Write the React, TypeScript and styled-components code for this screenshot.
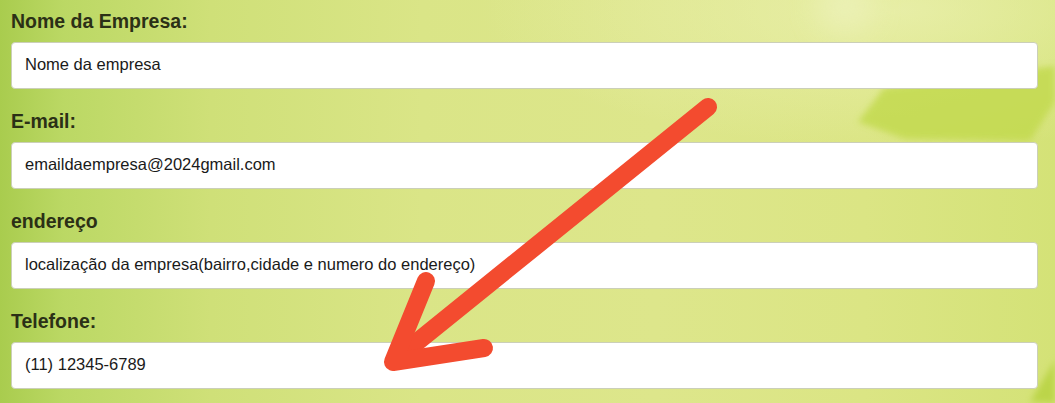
import React from "react";
import styled, { createGlobalStyle } from "styled-components";

const GlobalStyle = createGlobalStyle`
  html, body {
    margin: 0;
    padding: 0;
  }
  body {
    font-family: "Liberation Sans", Arial, sans-serif;
  }
`;

const fields = [
  { label: "Nome da Empresa:", value: "Nome da empresa" },
  { label: "E-mail:", value: "emaildaempresa@2024gmail.com" },
  { label: "endereço", value: "localização da empresa(bairro,cidade e numero do endereço)" },
  { label: "Telefone:", value: "(11) 12345-6789" },
];

const App: React.FC = () => {
  return (
    <>
      <GlobalStyle />
      <Page>
        <Backdrop viewBox="0 0 1055 403" preserveAspectRatio="none">
          <defs>
            <filter id="soft" x="-20%" y="-20%" width="140%" height="140%">
              <feGaussianBlur stdDeviation="3" />
            </filter>
            <filter id="softer" x="-50%" y="-50%" width="200%" height="200%">
              <feGaussianBlur stdDeviation="14" />
            </filter>
          </defs>
          <circle cx="845" cy="6" r="28" fill="#eef3bf" opacity="0.6" filter="url(#softer)" />
          <path
            d="M858 122 L884 88 L1055 66 L1055 102 L1030 141 L905 139 Z"
            fill="#c3da4f"
            opacity="0.85"
            filter="url(#soft)"
          />
          <path d="M1030 402 L1055 360 L1055 403 Z" fill="#bcd548" filter="url(#soft)" />
        </Backdrop>
        <Form>
          {fields.map((f) => (
            <Field key={f.label}>
              <Label>{f.label}</Label>
              <Input type="text" defaultValue={f.value} />
            </Field>
          ))}
        </Form>
        <Arrow viewBox="0 0 1055 403">
          <g
            fill="none"
            stroke="#f34b2f"
            strokeWidth="18"
            strokeLinecap="round"
            strokeLinejoin="round"
          >
            <line x1="708" y1="107" x2="396" y2="359" />
            <polyline points="426,281 393,362 484,348" />
          </g>
        </Arrow>
      </Page>
    </>
  );
};

const Page = styled.div`
  position: relative;
  width: 1055px;
  height: 403px;
  overflow: hidden;
  background:
    radial-gradient(ellipse 420px 140px at 900px 10px, rgba(240, 244, 190, 0.6), rgba(240, 244, 190, 0) 100%),
    linear-gradient(90deg, #a9cc4e 0%, #bbd864 6%, #cfe078 20%, #dae587 40%, #dde68b 62%, #dbe584 82%, #d4e277 100%);
`;

const Backdrop = styled.svg`
  position: absolute;
  inset: 0;
  width: 100%;
  height: 100%;
`;

const Arrow = styled.svg`
  position: absolute;
  inset: 0;
  width: 100%;
  height: 100%;
  pointer-events: none;
`;

const Form = styled.form`
  position: relative;
  display: flex;
  flex-direction: column;
  gap: 21px;
  padding: 10px 17px 0 11px;
`;

const Field = styled.div`
  display: flex;
  flex-direction: column;
  gap: 10px;
`;

const Label = styled.label`
  font-size: 19.5px;
  line-height: 22px;
  font-weight: 700;
  color: #2b3016;
`;

const Input = styled.input`
  box-sizing: border-box;
  width: 100%;
  height: 47px;
  padding: 0 13px 3px;
  border: 1px solid #cbcfb8;
  border-radius: 4px;
  background: #ffffff;
  font-family: "Liberation Sans", Arial, sans-serif;
  font-size: 16.5px;
  color: #1a1a1a;
  outline: none;
`;

export default App;
